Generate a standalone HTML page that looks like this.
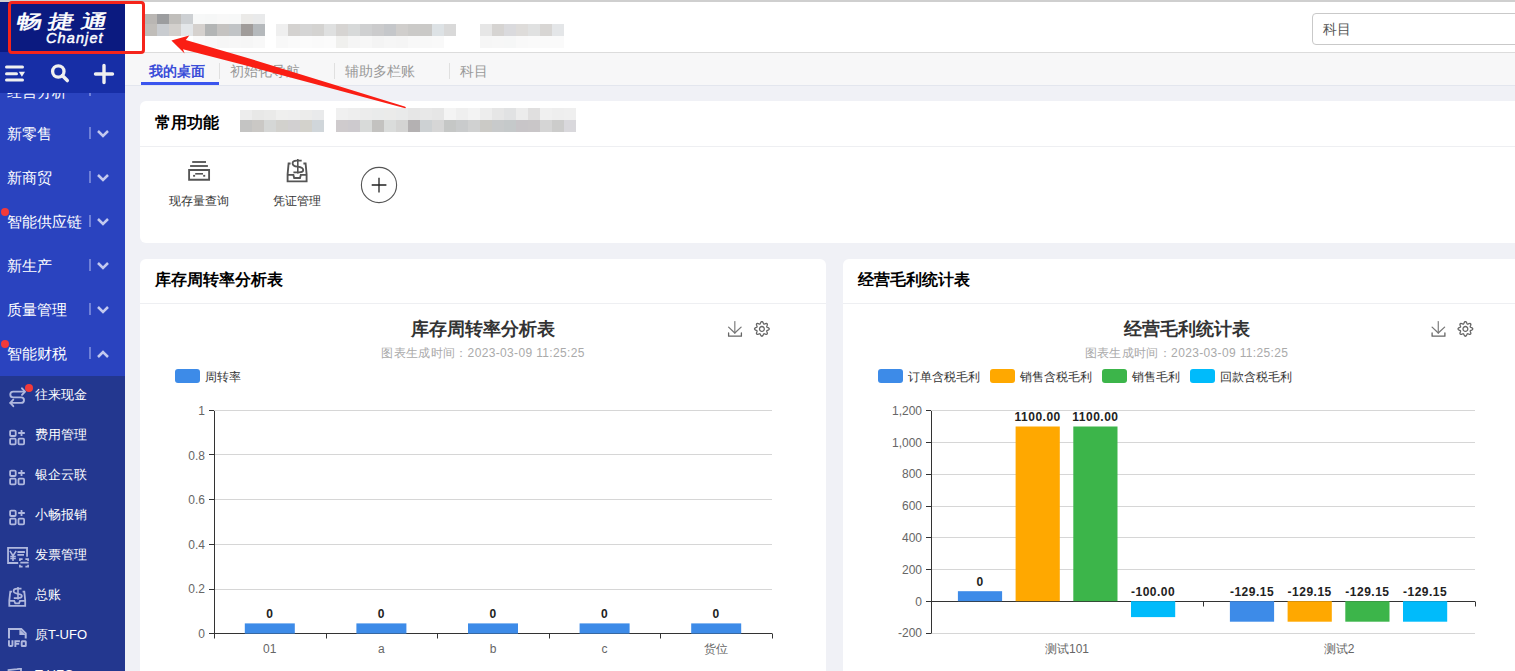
<!DOCTYPE html>
<html><head><meta charset="utf-8">
<style>
*{box-sizing:border-box;margin:0;padding:0}
html,body{width:1515px;height:671px;overflow:hidden}
body{position:relative;background:#f0f1f6;font-family:"Liberation Sans",sans-serif;color:#333}
.a{position:absolute}
#topline{left:0;top:0;width:1515px;height:2px;background:#cfcfcf}
#header{left:125px;top:2px;width:1390px;height:51px;background:#fff;border-bottom:1px solid #dcdcdc}
#tabs{left:125px;top:53px;width:1390px;height:33px;background:#f7f7f8;border-bottom:1px solid #e3e6ee}
#sidebar{left:0;top:2px;width:125px;height:669px;background:#2a43bf;overflow:hidden}
#logo{left:0;top:0;width:125px;height:50px;background:#0b1a80}
#toolbar{left:0;top:50px;width:125px;height:41px;background:#172ea6}
#sub{left:0;top:374px;width:125px;height:300px;background:#23378f}
.nav{position:absolute;left:7px;margin-top:1px;font-size:15.2px;color:#fff;line-height:20px;white-space:nowrap}
.sep{position:absolute;left:89px;width:2px;height:12px;background:#6f80d8}
.chev{position:absolute;left:96px;width:14px;height:10px}
.subi{position:absolute;left:35px;font-size:13px;color:#fff;line-height:18px;white-space:nowrap}
.sico{position:absolute;left:8px;width:20px;height:20px}
.dot{position:absolute;width:8px;height:8px;border-radius:50%;background:#f23a3a}
.card{position:absolute;background:#fff;border-radius:6px}
.ctitle{position:absolute;font-size:16px;font-weight:bold;color:#000;line-height:22px;white-space:nowrap}
.tab{position:absolute;top:62px;font-size:14px;line-height:18px;color:#999;white-space:nowrap}
.tsep{position:absolute;top:63px;width:1px;height:16px;background:#e0e0e0}
.mz{position:absolute;height:12px}
</style></head><body>
<div id="topline" class="a"></div>
<div id="header" class="a"></div>
<div id="tabs" class="a"></div>
<div class="mz" style="left:145px;top:14px;height:10px;width:12px;background:#b9b6b3"></div><div class="mz" style="left:157px;top:14px;height:10px;width:12px;background:#9c9d9f"></div><div class="mz" style="left:169px;top:14px;height:10px;width:12px;background:#c0bebb"></div><div class="mz" style="left:181px;top:14px;height:10px;width:12px;background:#cdd0d3"></div><div class="mz" style="left:193px;top:14px;height:10px;width:12px;background:#f7f8f8"></div><div class="mz" style="left:205px;top:14px;height:10px;width:12px;background:#f6f7f7"></div><div class="mz" style="left:217px;top:14px;height:10px;width:12px;background:#f8f8f8"></div><div class="mz" style="left:229px;top:14px;height:10px;width:12px;background:#f7f8f8"></div><div class="mz" style="left:241px;top:14px;height:10px;width:12px;background:#ebeae8"></div><div class="mz" style="left:253px;top:14px;height:10px;width:12px;background:#e9eaeb"></div><div class="mz" style="left:145px;top:24px;width:12px;background:#c0bdb9"></div><div class="mz" style="left:157px;top:24px;width:12px;background:#c9ccd0"></div><div class="mz" style="left:169px;top:24px;width:12px;background:#d3d0cd"></div><div class="mz" style="left:181px;top:24px;width:12px;background:#e3e6e9"></div><div class="mz" style="left:193px;top:24px;width:12px;background:#d5d1ce"></div><div class="mz" style="left:205px;top:24px;width:12px;background:#b3b5b5"></div><div class="mz" style="left:217px;top:24px;width:12px;background:#c5c3c1"></div><div class="mz" style="left:229px;top:24px;width:12px;background:#c1c4c6"></div><div class="mz" style="left:241px;top:24px;width:12px;background:#a09c9a"></div><div class="mz" style="left:253px;top:24px;width:12px;background:#b5b9bc"></div><div class="mz" style="left:193px;top:36px;width:12px;background:#fafafa"></div><div class="mz" style="left:205px;top:36px;width:12px;background:#f8f8f8"></div><div class="mz" style="left:217px;top:36px;width:12px;background:#f6f6f6"></div><div class="mz" style="left:229px;top:36px;width:12px;background:#f7f7f7"></div><div class="mz" style="left:241px;top:36px;width:12px;background:#f6f6f6"></div><div class="mz" style="left:253px;top:36px;width:12px;background:#f8f8f8"></div><div class="mz" style="left:276px;top:24px;width:12px;background:#efefef"></div><div class="mz" style="left:288px;top:24px;width:12px;background:#d4d2d0"></div><div class="mz" style="left:300px;top:24px;width:12px;background:#d5d5d5"></div><div class="mz" style="left:312px;top:24px;width:12px;background:#d4d3d1"></div><div class="mz" style="left:324px;top:24px;width:12px;background:#dfe0e0"></div><div class="mz" style="left:336px;top:24px;width:12px;background:#d6d4d2"></div><div class="mz" style="left:348px;top:24px;width:12px;background:#d7d9d9"></div><div class="mz" style="left:360px;top:24px;width:12px;background:#cfd0d1"></div><div class="mz" style="left:372px;top:24px;width:12px;background:#cbcbcc"></div><div class="mz" style="left:384px;top:24px;width:12px;background:#c5c7ca"></div><div class="mz" style="left:396px;top:24px;width:12px;background:#d0cecc"></div><div class="mz" style="left:408px;top:24px;width:12px;background:#cbcac8"></div><div class="mz" style="left:420px;top:24px;width:12px;background:#cac9c7"></div><div class="mz" style="left:432px;top:24px;width:12px;background:#dde2e5"></div><div class="mz" style="left:444px;top:24px;width:12px;background:#d9d9d9"></div><div class="mz" style="left:276px;top:36px;width:12px;background:#f8f8f8"></div><div class="mz" style="left:288px;top:36px;width:12px;background:#fafafa"></div><div class="mz" style="left:300px;top:36px;width:12px;background:#fbfbfb"></div><div class="mz" style="left:312px;top:36px;width:12px;background:#fafafa"></div><div class="mz" style="left:324px;top:36px;width:12px;background:#fbfbfb"></div><div class="mz" style="left:336px;top:36px;width:12px;background:#f0f0ee"></div><div class="mz" style="left:348px;top:36px;width:12px;background:#f5f5f5"></div><div class="mz" style="left:360px;top:36px;width:12px;background:#f7f7f7"></div><div class="mz" style="left:372px;top:36px;width:12px;background:#f4f4f4"></div><div class="mz" style="left:384px;top:36px;width:12px;background:#f6f6f6"></div><div class="mz" style="left:396px;top:36px;width:12px;background:#f5f5f5"></div><div class="mz" style="left:408px;top:36px;width:12px;background:#f8f8f8"></div><div class="mz" style="left:420px;top:36px;width:12px;background:#f8f8f8"></div><div class="mz" style="left:432px;top:36px;width:12px;background:#f9f9f9"></div><div class="mz" style="left:480px;top:24px;width:12px;background:#e6e6e6"></div><div class="mz" style="left:492px;top:24px;width:12px;background:#d6d4d2"></div><div class="mz" style="left:504px;top:24px;width:12px;background:#dadadd"></div><div class="mz" style="left:516px;top:24px;width:12px;background:#dedcda"></div><div class="mz" style="left:528px;top:24px;width:12px;background:#e0e1e1"></div><div class="mz" style="left:540px;top:24px;width:12px;background:#d8d6d4"></div><div class="mz" style="left:552px;top:24px;width:12px;background:#e4e6e8"></div><div class="mz" style="left:480px;top:36px;width:12px;background:#f6f6f6"></div><div class="mz" style="left:492px;top:36px;width:12px;background:#f7f7f7"></div><div class="mz" style="left:504px;top:36px;width:12px;background:#f6f7f7"></div><div class="mz" style="left:516px;top:36px;width:12px;background:#f9f9f9"></div><div class="mz" style="left:528px;top:36px;width:12px;background:#fafafa"></div><div class="mz" style="left:540px;top:36px;width:12px;background:#fafafa"></div><div class="mz" style="left:552px;top:36px;width:12px;background:#fafafa"></div>
<div class="a" style="left:1312px;top:13px;width:220px;height:32px;border:1px solid #c9c9c9;border-radius:4px;background:#fff"></div><div class="a" style="left:1323px;top:20px;font-size:14px;line-height:18px;color:#555">科目</div>
<div class="tab" style="left:149px;color:#3b4ed8;font-weight:bold">我的桌面</div>
<div class="a" style="left:141px;top:82px;width:78px;height:3px;background:#3a55ee"></div>
<div class="tsep" style="left:219px"></div>
<div class="tab" style="left:230px">初始化导航</div>
<div class="tsep" style="left:334px"></div>
<div class="tab" style="left:345px">辅助多栏账</div>
<div class="tsep" style="left:449px"></div>
<div class="tab" style="left:460px">科目</div>

<div id="sidebar" class="a">
  <div id="logo" class="a">
    <div class="a" style="left:16px;top:9px;font-size:19px;line-height:22px;color:#fff;font-weight:500;-webkit-text-stroke:0.5px #fff;transform:skewX(-13deg) scaleX(1.38);transform-origin:0 50%;letter-spacing:4.6px;white-space:nowrap">畅捷通</div>
    <div class="a" style="left:46px;top:27px;font-size:14.5px;line-height:18px;color:#fff;font-style:italic;font-weight:normal;-webkit-text-stroke:0.45px #fff;letter-spacing:1.1px;white-space:nowrap">Chanjet</div>
  </div>
  <div class="a" style="left:0;top:91px;width:125px;height:283px;overflow:hidden">
    <div class="nav" style="top:-12px">经营分析</div>
    <div class="sep" style="top:-9px"></div>
    <div class="nav" style="top:30px">新零售</div>
    <div class="sep" style="top:34px"></div>
    <svg class="chev" style="top:36px" viewBox="0 0 14 10"><path d="M2 2 L7 7 L12 2" fill="none" stroke="#c3c9ef" stroke-width="2.5"/></svg>
    <div class="nav" style="top:74px">新商贸</div>
    <div class="sep" style="top:78px"></div>
    <svg class="chev" style="top:80px" viewBox="0 0 14 10"><path d="M2 2 L7 7 L12 2" fill="none" stroke="#c3c9ef" stroke-width="2.5"/></svg>
    <div class="nav" style="top:118px">智能供应链</div>
    <div class="sep" style="top:122px"></div>
    <svg class="chev" style="top:124px" viewBox="0 0 14 10"><path d="M2 2 L7 7 L12 2" fill="none" stroke="#c3c9ef" stroke-width="2.5"/></svg>
    <div class="dot" style="left:1px;top:115px"></div>
    <div class="nav" style="top:162px">新生产</div>
    <div class="sep" style="top:166px"></div>
    <svg class="chev" style="top:168px" viewBox="0 0 14 10"><path d="M2 2 L7 7 L12 2" fill="none" stroke="#c3c9ef" stroke-width="2.5"/></svg>
    <div class="nav" style="top:206px">质量管理</div>
    <div class="sep" style="top:210px"></div>
    <svg class="chev" style="top:212px" viewBox="0 0 14 10"><path d="M2 2 L7 7 L12 2" fill="none" stroke="#c3c9ef" stroke-width="2.5"/></svg>
    <div class="nav" style="top:250px">智能财税</div>
    <div class="sep" style="top:254px"></div>
    <svg class="chev" style="top:256px" viewBox="0 0 14 10"><path d="M2 8 L7 3 L12 8" fill="none" stroke="#c3c9ef" stroke-width="2.5"/></svg>
    <div class="dot" style="left:1px;top:247px"></div>
  </div>
  <div id="toolbar" class="a">
    <svg class="a" style="left:4px;top:13px" width="22" height="18" viewBox="0 0 22 18"><g fill="#f0f0f0"><rect x="1" y="0.6" width="19" height="3" rx="1.5"/><rect x="1" y="7.2" width="13" height="3" rx="1.5"/><rect x="1" y="13.6" width="19" height="3" rx="1.5"/><path d="M14.8 6.8 L21 6.8 L17.9 11.8 Z"/></g></svg>
    <svg class="a" style="left:50px;top:11px" width="21" height="21" viewBox="0 0 21 21"><circle cx="8.3" cy="8.5" r="5.7" fill="none" stroke="#f0f0f0" stroke-width="3.3"/><path d="M12.3 12.6 L17.3 17.6" stroke="#f0f0f0" stroke-width="3.5" stroke-linecap="round"/></svg>
    <svg class="a" style="left:93px;top:11px" width="22" height="22" viewBox="0 0 22 22"><path d="M11 2.5 V19.5 M2.5 11 H19.5" stroke="#f0f0f0" stroke-width="3.4" stroke-linecap="round"/></svg>
  </div>
  <div id="sub" class="a">
    
<svg class="a" style="left:8px;top:10px" width="19" height="22" viewBox="0 0 19 22"><g fill="none" stroke="#b0b8de" stroke-width="1.9" stroke-linecap="round" stroke-linejoin="round"><path d="M16.5 5.6 H5.2 Q2.3 5.6 2.3 8.5 Q2.3 11.4 5.2 11.4 H13.1 Q16 11.4 16 14.15 Q16 16.9 13.1 16.9 H2.4"/><path d="M14 2.3 L17 5.6 L14 8.9"/><path d="M5.3 13.6 L2.3 16.9 L5.3 20.2"/></g></svg>
<div class="dot" style="left:25px;top:8px"></div>
<svg class="a" style="left:9px;top:53px" width="17" height="17" viewBox="0 0 17 17"><g fill="none" stroke="#b0b8de" stroke-width="1.8"><rect x="1.1" y="1.6" width="5.6" height="5.4" rx="1"/><rect x="1.1" y="9.7" width="5.6" height="5.6" rx="1"/><rect x="9.5" y="9.7" width="5.6" height="5.6" rx="1"/><path d="M12.5 0.9 V7.1 M9.2 4 H15.8"/></g></svg>
<svg class="a" style="left:9px;top:93px" width="17" height="17" viewBox="0 0 17 17"><g fill="none" stroke="#b0b8de" stroke-width="1.8"><rect x="1.1" y="1.6" width="5.6" height="5.4" rx="1"/><rect x="1.1" y="9.7" width="5.6" height="5.6" rx="1"/><rect x="9.5" y="9.7" width="5.6" height="5.6" rx="1"/><path d="M12.5 0.9 V7.1 M9.2 4 H15.8"/></g></svg>
<svg class="a" style="left:9px;top:133px" width="17" height="17" viewBox="0 0 17 17"><g fill="none" stroke="#b0b8de" stroke-width="1.8"><rect x="1.1" y="1.6" width="5.6" height="5.4" rx="1"/><rect x="1.1" y="9.7" width="5.6" height="5.6" rx="1"/><rect x="9.5" y="9.7" width="5.6" height="5.6" rx="1"/><path d="M12.5 0.9 V7.1 M9.2 4 H15.8"/></g></svg>
<svg class="a" style="left:7px;top:171px" width="24" height="22" viewBox="0 0 24 22"><g fill="none" stroke="#b0b8de" stroke-width="1.8"><path d="M11.2 16 H1.05 V0.9 H20.05 V9.8"/><path d="M2.9 3.9 L6 8.8 L9.2 3.9 M6 8.8 V14 M3.3 9.5 H8.8 M3.3 11.5 H8.8" stroke-width="1.6"/><path d="M10.4 5 H17.9 M10.4 7.9 H17"/><path d="M12.9 14 V12.1 H15.6 M18.4 12.1 H21.1 V14 M12.9 17.8 V19.7 H15.6 M18.4 19.7 H21.1 V17.8 M13.3 15.6 H21.6" stroke-width="1.7"/></g></svg>
<svg class="a" style="left:8px;top:210px" width="19" height="21" viewBox="0 0 19 21"><g fill="none" stroke="#b0b8de" stroke-width="1.8"><path d="M4.1 5.6 H2.3 L1.3 14.4 V19.8 H17.2 V14.4 L16.3 5.6 H14.6"/><path d="M1.3 14.8 H6.2 L7.3 17.3 H11 L12 14.8 H17.2"/><path d="M13.5 2.7 H9.2 Q5.6 2.7 5.6 5.1 Q5.6 7.3 9.8 7.8 Q13.9 8.3 13.9 10.1 Q13.9 12.1 10 12.1 H5.8" stroke-width="1.7"/><path d="M10 0.9 V13.6" stroke-width="1.6"/></g></svg>
<svg class="a" style="left:7px;top:252px" width="22" height="21" viewBox="0 0 22 21"><g fill="none" stroke="#b0b8de" stroke-width="2"><path d="M2 10.6 V1 H14.3 L18.7 5.4 V10.6"/><path d="M1.95 12.3 V17.2 Q1.95 18.05 2.9 18.05 H4.5 Q5.45 18.05 5.45 17.2 V12.3" stroke-width="1.9"/><path d="M8.35 19 V13.25 H12.9 M8.35 15.9 H12.2" stroke-width="1.9"/><rect x="14.7" y="13.25" width="4.1" height="4.8" rx="0.6" stroke-width="1.9"/></g><path d="M12.4 1 V6.9 H18.7 Z" fill="#b0b8de"/></svg>
<svg class="a" style="left:7px;top:292px" width="20" height="6" viewBox="0 0 20 6"><path d="M1.5 6 V2 L10 1.2 L14 0.6 V6" fill="none" stroke="#b0b8de" stroke-width="1.8"/></svg>
<div class="subi" style="top:10px">往来现金</div>
    <div class="subi" style="top:50px">费用管理</div>
    <div class="subi" style="top:90px">银企云联</div>
    <div class="subi" style="top:130px">小畅报销</div>
    <div class="subi" style="top:170px">发票管理</div>
    <div class="subi" style="top:210px">总账</div>
    <div class="subi" style="top:250px">原T-UFO</div>
    <div class="subi" style="top:290px">T-UFO</div>
  </div>
</div>

<div class="card" style="left:140px;top:101px;width:1400px;height:142px">
  <div class="ctitle" style="left:15px;top:11px">常用功能</div>
  <div class="a" style="left:0;top:45px;width:1400px;height:1px;background:#eeeff2"></div>
  <div class="a" style="left:0;top:92px;width:118px;text-align:center;font-size:12px;line-height:16px;color:#333">现存量查询</div>
  <div class="a" style="left:98px;top:92px;width:118px;text-align:center;font-size:12px;line-height:16px;color:#333">凭证管理</div>
  <svg class="a" style="left:47px;top:59px" width="25" height="23" viewBox="0 0 25 23"><g fill="none" stroke="#555" stroke-width="1.85"><path d="M5.2 2 H19"/><path d="M3.1 6 H20.9"/><path d="M2.1 10 H22.1 V19.7 H2.1 Z"/><path d="M8.2 13.8 H16" stroke-width="1.6"/></g><g fill="#555"><rect x="6.1" y="14.9" width="2" height="1.8"/><rect x="16.2" y="14.9" width="2" height="1.8"/></g></svg>
  <svg class="a" style="left:145px;top:57px" width="25" height="26" viewBox="0 0 25 26"><g fill="none" stroke="#555" stroke-width="1.85"><path d="M5.6 5.5 H3.6 L2.6 16.4 V23.4 H21.6 V16.4 L20.6 5.5 H18.4"/><path d="M2.6 16.9 H8.4 L9.2 20 H15 L15.8 16.9 H21.6"/><path d="M16.7 2.6 H11.5 Q7.6 2.6 7.6 5.4 Q7.6 8 12.6 8.7 Q18.2 9.5 18.2 12 Q18.2 14.3 14 14.3 H8.4"/><path d="M12.8 1 V15.6" stroke-width="1.6"/></g></svg>
  <svg class="a" style="left:220px;top:65px" width="38" height="38" viewBox="0 0 38 38"><circle cx="19" cy="19" r="17.6" fill="none" stroke="#555" stroke-width="1.1"/><path d="M11.7 19 H26.4 M19 11.8 V26.6" stroke="#222" stroke-width="1.3"/></svg>
</div>
<div class="mz" style="left:240px;top:110px;width:12px;height:10px;background:#ededed"></div><div class="mz" style="left:252px;top:110px;width:12px;height:10px;background:#e8e8e7"></div><div class="mz" style="left:264px;top:110px;width:12px;height:10px;background:#eaeae9"></div><div class="mz" style="left:276px;top:110px;width:12px;height:10px;background:#efefee"></div><div class="mz" style="left:288px;top:110px;width:12px;height:10px;background:#eeeeee"></div><div class="mz" style="left:300px;top:110px;width:12px;height:10px;background:#ececeb"></div><div class="mz" style="left:312px;top:110px;width:12px;height:10px;background:#e9eaeb"></div><div class="mz" style="left:240px;top:120px;width:12px;height:12px;background:#c4c4c3"></div><div class="mz" style="left:252px;top:120px;width:12px;height:12px;background:#cac8c5"></div><div class="mz" style="left:264px;top:120px;width:12px;height:12px;background:#d5d7d6"></div><div class="mz" style="left:276px;top:120px;width:12px;height:12px;background:#d2d1cd"></div><div class="mz" style="left:288px;top:120px;width:12px;height:12px;background:#d2d0d1"></div><div class="mz" style="left:300px;top:120px;width:12px;height:12px;background:#d3d2cc"></div><div class="mz" style="left:312px;top:120px;width:12px;height:12px;background:#d0d6da"></div><div class="mz" style="left:336px;top:108px;width:12px;height:12px;background:#f0f0f0"></div><div class="mz" style="left:348px;top:108px;width:12px;height:12px;background:#eeeeee"></div><div class="mz" style="left:360px;top:108px;width:12px;height:12px;background:#ececec"></div><div class="mz" style="left:372px;top:108px;width:12px;height:12px;background:#eaebeb"></div><div class="mz" style="left:384px;top:108px;width:12px;height:12px;background:#ebebea"></div><div class="mz" style="left:396px;top:108px;width:12px;height:12px;background:#e9eaea"></div><div class="mz" style="left:408px;top:108px;width:12px;height:12px;background:#e6e6e6"></div><div class="mz" style="left:420px;top:108px;width:12px;height:12px;background:#e8e8e8"></div><div class="mz" style="left:432px;top:108px;width:12px;height:12px;background:#e6e6e6"></div><div class="mz" style="left:444px;top:108px;width:12px;height:12px;background:#f4f4f4"></div><div class="mz" style="left:456px;top:108px;width:12px;height:12px;background:#efefef"></div><div class="mz" style="left:468px;top:108px;width:12px;height:12px;background:#f3f3f3"></div><div class="mz" style="left:480px;top:108px;width:12px;height:12px;background:#ededed"></div><div class="mz" style="left:492px;top:108px;width:12px;height:12px;background:#e6e6e6"></div><div class="mz" style="left:504px;top:108px;width:12px;height:12px;background:#e1e2e3"></div><div class="mz" style="left:516px;top:108px;width:12px;height:12px;background:#ececec"></div><div class="mz" style="left:528px;top:108px;width:12px;height:12px;background:#e0dfdf"></div><div class="mz" style="left:540px;top:108px;width:12px;height:12px;background:#f0f0f0"></div><div class="mz" style="left:552px;top:108px;width:12px;height:12px;background:#eeeeee"></div><div class="mz" style="left:564px;top:108px;width:12px;height:12px;background:#efefef"></div><div class="mz" style="left:336px;top:120px;width:12px;height:12px;background:#cfcbcd"></div><div class="mz" style="left:348px;top:120px;width:12px;height:12px;background:#cdcace"></div><div class="mz" style="left:360px;top:120px;width:12px;height:12px;background:#d8dad9"></div><div class="mz" style="left:372px;top:120px;width:12px;height:12px;background:#c3c2c0"></div><div class="mz" style="left:384px;top:120px;width:12px;height:12px;background:#dadcdb"></div><div class="mz" style="left:396px;top:120px;width:12px;height:12px;background:#d4d4d3"></div><div class="mz" style="left:408px;top:120px;width:12px;height:12px;background:#b4b1b2"></div><div class="mz" style="left:420px;top:120px;width:12px;height:12px;background:#cdd1d3"></div><div class="mz" style="left:432px;top:120px;width:12px;height:12px;background:#d6d6d6"></div><div class="mz" style="left:444px;top:120px;width:12px;height:12px;background:#c5c7c6"></div><div class="mz" style="left:456px;top:120px;width:12px;height:12px;background:#c9cbcc"></div><div class="mz" style="left:468px;top:120px;width:12px;height:12px;background:#d0d1d1"></div><div class="mz" style="left:480px;top:120px;width:12px;height:12px;background:#cbcac6"></div><div class="mz" style="left:492px;top:120px;width:12px;height:12px;background:#c8cacb"></div><div class="mz" style="left:504px;top:120px;width:12px;height:12px;background:#c5c9ca"></div><div class="mz" style="left:516px;top:120px;width:12px;height:12px;background:#c8c5c8"></div><div class="mz" style="left:528px;top:120px;width:12px;height:12px;background:#c9c6c8"></div><div class="mz" style="left:540px;top:120px;width:12px;height:12px;background:#d5d5d5"></div><div class="mz" style="left:552px;top:120px;width:12px;height:12px;background:#cccccb"></div><div class="mz" style="left:564px;top:120px;width:12px;height:12px;background:#d9d8dc"></div>
<div class="card" style="left:140px;top:259px;width:686px;height:430px">
<div class="ctitle" style="left:15px;top:10px">库存周转率分析表</div>
<div class="a" style="left:0;top:44px;width:686px;height:1px;background:#eeeff2"></div>
<svg class="a" style="left:0;top:0" width="686" height="430" viewBox="0 0 686 430">
<text x="343" y="76" text-anchor="middle" style="font-family:'Liberation Sans',sans-serif;font-size:18px;font-weight:bold" fill="#333">库存周转率分析表</text>
<text x="343" y="98" text-anchor="middle" style="font-family:'Liberation Sans',sans-serif;font-size:12px;letter-spacing:0.35px" fill="#aaa">图表生成时间：2023-03-09 11:25:25</text>
<g transform="translate(588,62)" fill="none" stroke="#666" stroke-width="1.3" stroke-linecap="round" stroke-linejoin="round">
<path d="M6.8 0.6 V12" stroke="#888"/><path d="M0.6 6.1 L6.8 12 L13.1 6.1" stroke="#777"/><path d="M0.6 11.9 V15.2 H13.4 V11.9"/></g><g transform="translate(621.9,69.9)" fill="none" stroke="#666" stroke-width="1.3"><path d="M0.00 -7.35 L0.29 -7.29 L0.56 -7.13 L0.81 -6.87 L1.04 -6.54 L1.23 -6.18 L1.39 -5.81 L1.54 -5.47 L1.68 -5.18 L1.83 -4.97 L2.01 -4.85 L2.22 -4.81 L2.47 -4.86 L2.78 -4.96 L3.12 -5.09 L3.50 -5.24 L3.89 -5.36 L4.28 -5.43 L4.64 -5.44 L4.95 -5.36 L5.20 -5.20 L5.36 -4.95 L5.44 -4.64 L5.43 -4.28 L5.36 -3.89 L5.24 -3.50 L5.09 -3.12 L4.96 -2.78 L4.86 -2.47 L4.81 -2.22 L4.85 -2.01 L4.97 -1.83 L5.18 -1.68 L5.47 -1.54 L5.81 -1.39 L6.18 -1.23 L6.54 -1.04 L6.87 -0.81 L7.13 -0.56 L7.29 -0.29 L7.35 -0.00 L7.29 0.29 L7.13 0.56 L6.87 0.81 L6.54 1.04 L6.18 1.23 L5.81 1.39 L5.47 1.54 L5.18 1.68 L4.97 1.83 L4.85 2.01 L4.81 2.22 L4.86 2.47 L4.96 2.78 L5.09 3.12 L5.24 3.50 L5.36 3.89 L5.43 4.28 L5.44 4.64 L5.36 4.95 L5.20 5.20 L4.95 5.36 L4.64 5.44 L4.28 5.43 L3.89 5.36 L3.50 5.24 L3.12 5.09 L2.78 4.96 L2.47 4.86 L2.22 4.81 L2.01 4.85 L1.83 4.97 L1.68 5.18 L1.54 5.47 L1.39 5.81 L1.23 6.18 L1.04 6.54 L0.81 6.87 L0.56 7.13 L0.29 7.29 L0.00 7.35 L-0.29 7.29 L-0.56 7.13 L-0.81 6.87 L-1.04 6.54 L-1.23 6.18 L-1.39 5.81 L-1.54 5.47 L-1.68 5.18 L-1.83 4.97 L-2.01 4.85 L-2.22 4.81 L-2.47 4.86 L-2.78 4.96 L-3.12 5.09 L-3.50 5.24 L-3.89 5.36 L-4.28 5.43 L-4.64 5.44 L-4.95 5.36 L-5.20 5.20 L-5.36 4.95 L-5.44 4.64 L-5.43 4.28 L-5.36 3.89 L-5.24 3.50 L-5.09 3.12 L-4.96 2.78 L-4.86 2.47 L-4.81 2.22 L-4.85 2.01 L-4.97 1.83 L-5.18 1.68 L-5.47 1.54 L-5.81 1.39 L-6.18 1.23 L-6.54 1.04 L-6.87 0.81 L-7.13 0.56 L-7.29 0.29 L-7.35 0.00 L-7.29 -0.29 L-7.13 -0.56 L-6.87 -0.81 L-6.54 -1.04 L-6.18 -1.23 L-5.81 -1.39 L-5.47 -1.54 L-5.18 -1.68 L-4.97 -1.83 L-4.85 -2.01 L-4.81 -2.22 L-4.86 -2.47 L-4.96 -2.78 L-5.09 -3.12 L-5.24 -3.50 L-5.36 -3.89 L-5.43 -4.28 L-5.44 -4.64 L-5.36 -4.95 L-5.20 -5.20 L-4.95 -5.36 L-4.64 -5.44 L-4.28 -5.43 L-3.89 -5.36 L-3.50 -5.24 L-3.12 -5.09 L-2.78 -4.96 L-2.47 -4.86 L-2.22 -4.81 L-2.01 -4.85 L-1.83 -4.97 L-1.68 -5.18 L-1.54 -5.47 L-1.39 -5.81 L-1.23 -6.18 L-1.04 -6.54 L-0.81 -6.87 L-0.56 -7.13 L-0.29 -7.29 L-0.00 -7.35Z"/><circle cx="0" cy="0" r="2.4"/></g>
<rect x="35" y="110" width="25" height="14" rx="3" fill="#3d8be8"/>
<text x="65" y="121.5" style="font-family:'Liberation Sans',sans-serif;font-size:12px" fill="#333">周转率</text>
<path d="M69 374.5 H74" stroke="#333" stroke-width="1"/>
<text x="65" y="378.9" text-anchor="end" style="font-family:'Liberation Sans',sans-serif;font-size:12px" fill="#666">0</text>
<path d="M74 330.5 H632" stroke="#d6d6d6" stroke-width="1"/>
<path d="M69 330.5 H74" stroke="#333" stroke-width="1"/>
<text x="65" y="334.3" text-anchor="end" style="font-family:'Liberation Sans',sans-serif;font-size:12px" fill="#666">0.2</text>
<path d="M74 285.5 H632" stroke="#d6d6d6" stroke-width="1"/>
<path d="M69 285.5 H74" stroke="#333" stroke-width="1"/>
<text x="65" y="289.7" text-anchor="end" style="font-family:'Liberation Sans',sans-serif;font-size:12px" fill="#666">0.4</text>
<path d="M74 240.5 H632" stroke="#d6d6d6" stroke-width="1"/>
<path d="M69 240.5 H74" stroke="#333" stroke-width="1"/>
<text x="65" y="245.1" text-anchor="end" style="font-family:'Liberation Sans',sans-serif;font-size:12px" fill="#666">0.6</text>
<path d="M74 195.5 H632" stroke="#d6d6d6" stroke-width="1"/>
<path d="M69 195.5 H74" stroke="#333" stroke-width="1"/>
<text x="65" y="200.5" text-anchor="end" style="font-family:'Liberation Sans',sans-serif;font-size:12px" fill="#666">0.8</text>
<path d="M74 151.5 H632" stroke="#d6d6d6" stroke-width="1"/>
<path d="M69 151.5 H74" stroke="#333" stroke-width="1"/>
<text x="65" y="155.9" text-anchor="end" style="font-family:'Liberation Sans',sans-serif;font-size:12px" fill="#666">1</text>
<path d="M74.5 152 V374.5" stroke="#333" stroke-width="1"/>
<path d="M74 374.5 H632" stroke="#333" stroke-width="1"/>
<path d="M74.5 374.5 V379.5" stroke="#333" stroke-width="1"/>
<path d="M186.5 374.5 V379.5" stroke="#333" stroke-width="1"/>
<path d="M297.5 374.5 V379.5" stroke="#333" stroke-width="1"/>
<path d="M409.5 374.5 V379.5" stroke="#333" stroke-width="1"/>
<path d="M520.5 374.5 V379.5" stroke="#333" stroke-width="1"/>
<path d="M632.5 374.5 V379.5" stroke="#333" stroke-width="1"/>
<rect x="104.8" y="364.4" width="50" height="10.2" fill="#3d8be8"/>
<text x="129.8" y="359.3" text-anchor="middle" style="font-family:'Liberation Sans',sans-serif;font-size:12px;font-weight:bold;letter-spacing:0.5px" fill="#222">0</text>
<text x="129.8" y="394" text-anchor="middle" style="font-family:'Liberation Sans',sans-serif;font-size:12px" fill="#666">01</text>
<rect x="216.4" y="364.4" width="50" height="10.2" fill="#3d8be8"/>
<text x="241.4" y="359.3" text-anchor="middle" style="font-family:'Liberation Sans',sans-serif;font-size:12px;font-weight:bold;letter-spacing:0.5px" fill="#222">0</text>
<text x="241.4" y="394" text-anchor="middle" style="font-family:'Liberation Sans',sans-serif;font-size:12px" fill="#666">a</text>
<rect x="328.0" y="364.4" width="50" height="10.2" fill="#3d8be8"/>
<text x="353.0" y="359.3" text-anchor="middle" style="font-family:'Liberation Sans',sans-serif;font-size:12px;font-weight:bold;letter-spacing:0.5px" fill="#222">0</text>
<text x="353.0" y="394" text-anchor="middle" style="font-family:'Liberation Sans',sans-serif;font-size:12px" fill="#666">b</text>
<rect x="439.6" y="364.4" width="50" height="10.2" fill="#3d8be8"/>
<text x="464.6" y="359.3" text-anchor="middle" style="font-family:'Liberation Sans',sans-serif;font-size:12px;font-weight:bold;letter-spacing:0.5px" fill="#222">0</text>
<text x="464.6" y="394" text-anchor="middle" style="font-family:'Liberation Sans',sans-serif;font-size:12px" fill="#666">c</text>
<rect x="551.2" y="364.4" width="50" height="10.2" fill="#3d8be8"/>
<text x="576.2" y="359.3" text-anchor="middle" style="font-family:'Liberation Sans',sans-serif;font-size:12px;font-weight:bold;letter-spacing:0.5px" fill="#222">0</text>
<text x="576.2" y="394" text-anchor="middle" style="font-family:'Liberation Sans',sans-serif;font-size:12px" fill="#666">货位</text>
</svg>
</div>
<div class="card" style="left:843px;top:259px;width:687px;height:430px">
<div class="ctitle" style="left:15px;top:10px">经营毛利统计表</div>
<div class="a" style="left:0;top:44px;width:687px;height:1px;background:#eeeff2"></div>
<svg class="a" style="left:0;top:0" width="687" height="430" viewBox="0 0 687 430">
<text x="343.5" y="76" text-anchor="middle" style="font-family:'Liberation Sans',sans-serif;font-size:18px;font-weight:bold" fill="#333">经营毛利统计表</text>
<text x="343.5" y="98" text-anchor="middle" style="font-family:'Liberation Sans',sans-serif;font-size:12px;letter-spacing:0.35px" fill="#aaa">图表生成时间：2023-03-09 11:25:25</text>
<g transform="translate(588.5,62)" fill="none" stroke="#666" stroke-width="1.3" stroke-linecap="round" stroke-linejoin="round">
<path d="M6.8 0.6 V12" stroke="#888"/><path d="M0.6 6.1 L6.8 12 L13.1 6.1" stroke="#777"/><path d="M0.6 11.9 V15.2 H13.4 V11.9"/></g><g transform="translate(622.4,69.9)" fill="none" stroke="#666" stroke-width="1.3"><path d="M0.00 -7.35 L0.29 -7.29 L0.56 -7.13 L0.81 -6.87 L1.04 -6.54 L1.23 -6.18 L1.39 -5.81 L1.54 -5.47 L1.68 -5.18 L1.83 -4.97 L2.01 -4.85 L2.22 -4.81 L2.47 -4.86 L2.78 -4.96 L3.12 -5.09 L3.50 -5.24 L3.89 -5.36 L4.28 -5.43 L4.64 -5.44 L4.95 -5.36 L5.20 -5.20 L5.36 -4.95 L5.44 -4.64 L5.43 -4.28 L5.36 -3.89 L5.24 -3.50 L5.09 -3.12 L4.96 -2.78 L4.86 -2.47 L4.81 -2.22 L4.85 -2.01 L4.97 -1.83 L5.18 -1.68 L5.47 -1.54 L5.81 -1.39 L6.18 -1.23 L6.54 -1.04 L6.87 -0.81 L7.13 -0.56 L7.29 -0.29 L7.35 -0.00 L7.29 0.29 L7.13 0.56 L6.87 0.81 L6.54 1.04 L6.18 1.23 L5.81 1.39 L5.47 1.54 L5.18 1.68 L4.97 1.83 L4.85 2.01 L4.81 2.22 L4.86 2.47 L4.96 2.78 L5.09 3.12 L5.24 3.50 L5.36 3.89 L5.43 4.28 L5.44 4.64 L5.36 4.95 L5.20 5.20 L4.95 5.36 L4.64 5.44 L4.28 5.43 L3.89 5.36 L3.50 5.24 L3.12 5.09 L2.78 4.96 L2.47 4.86 L2.22 4.81 L2.01 4.85 L1.83 4.97 L1.68 5.18 L1.54 5.47 L1.39 5.81 L1.23 6.18 L1.04 6.54 L0.81 6.87 L0.56 7.13 L0.29 7.29 L0.00 7.35 L-0.29 7.29 L-0.56 7.13 L-0.81 6.87 L-1.04 6.54 L-1.23 6.18 L-1.39 5.81 L-1.54 5.47 L-1.68 5.18 L-1.83 4.97 L-2.01 4.85 L-2.22 4.81 L-2.47 4.86 L-2.78 4.96 L-3.12 5.09 L-3.50 5.24 L-3.89 5.36 L-4.28 5.43 L-4.64 5.44 L-4.95 5.36 L-5.20 5.20 L-5.36 4.95 L-5.44 4.64 L-5.43 4.28 L-5.36 3.89 L-5.24 3.50 L-5.09 3.12 L-4.96 2.78 L-4.86 2.47 L-4.81 2.22 L-4.85 2.01 L-4.97 1.83 L-5.18 1.68 L-5.47 1.54 L-5.81 1.39 L-6.18 1.23 L-6.54 1.04 L-6.87 0.81 L-7.13 0.56 L-7.29 0.29 L-7.35 0.00 L-7.29 -0.29 L-7.13 -0.56 L-6.87 -0.81 L-6.54 -1.04 L-6.18 -1.23 L-5.81 -1.39 L-5.47 -1.54 L-5.18 -1.68 L-4.97 -1.83 L-4.85 -2.01 L-4.81 -2.22 L-4.86 -2.47 L-4.96 -2.78 L-5.09 -3.12 L-5.24 -3.50 L-5.36 -3.89 L-5.43 -4.28 L-5.44 -4.64 L-5.36 -4.95 L-5.20 -5.20 L-4.95 -5.36 L-4.64 -5.44 L-4.28 -5.43 L-3.89 -5.36 L-3.50 -5.24 L-3.12 -5.09 L-2.78 -4.96 L-2.47 -4.86 L-2.22 -4.81 L-2.01 -4.85 L-1.83 -4.97 L-1.68 -5.18 L-1.54 -5.47 L-1.39 -5.81 L-1.23 -6.18 L-1.04 -6.54 L-0.81 -6.87 L-0.56 -7.13 L-0.29 -7.29 L-0.00 -7.35Z"/><circle cx="0" cy="0" r="2.4"/></g>
<rect x="35" y="110" width="25" height="14" rx="3" fill="#3d8be8"/>
<text x="65" y="121.5" style="font-family:'Liberation Sans',sans-serif;font-size:12px" fill="#333">订单含税毛利</text>
<rect x="147" y="110" width="25" height="14" rx="3" fill="#ffa800"/>
<text x="177" y="121.5" style="font-family:'Liberation Sans',sans-serif;font-size:12px" fill="#333">销售含税毛利</text>
<rect x="259" y="110" width="25" height="14" rx="3" fill="#3cb54a"/>
<text x="289" y="121.5" style="font-family:'Liberation Sans',sans-serif;font-size:12px" fill="#333">销售毛利</text>
<rect x="347" y="110" width="25" height="14" rx="3" fill="#00bbfb"/>
<text x="377" y="121.5" style="font-family:'Liberation Sans',sans-serif;font-size:12px" fill="#333">回款含税毛利</text>
<path d="M88 151.5 H632" stroke="#d6d6d6" stroke-width="1"/>
<path d="M83 151.5 H88" stroke="#333" stroke-width="1"/>
<text x="79" y="155.9" text-anchor="end" style="font-family:'Liberation Sans',sans-serif;font-size:12px" fill="#666">1,200</text>
<path d="M88 183.5 H632" stroke="#d6d6d6" stroke-width="1"/>
<path d="M83 183.5 H88" stroke="#333" stroke-width="1"/>
<text x="79" y="187.7" text-anchor="end" style="font-family:'Liberation Sans',sans-serif;font-size:12px" fill="#666">1,000</text>
<path d="M88 215.5 H632" stroke="#d6d6d6" stroke-width="1"/>
<path d="M83 215.5 H88" stroke="#333" stroke-width="1"/>
<text x="79" y="219.4" text-anchor="end" style="font-family:'Liberation Sans',sans-serif;font-size:12px" fill="#666">800</text>
<path d="M88 247.5 H632" stroke="#d6d6d6" stroke-width="1"/>
<path d="M83 247.5 H88" stroke="#333" stroke-width="1"/>
<text x="79" y="251.2" text-anchor="end" style="font-family:'Liberation Sans',sans-serif;font-size:12px" fill="#666">600</text>
<path d="M88 278.5 H632" stroke="#d6d6d6" stroke-width="1"/>
<path d="M83 278.5 H88" stroke="#333" stroke-width="1"/>
<text x="79" y="283.0" text-anchor="end" style="font-family:'Liberation Sans',sans-serif;font-size:12px" fill="#666">400</text>
<path d="M88 310.5 H632" stroke="#d6d6d6" stroke-width="1"/>
<path d="M83 310.5 H88" stroke="#333" stroke-width="1"/>
<text x="79" y="314.8" text-anchor="end" style="font-family:'Liberation Sans',sans-serif;font-size:12px" fill="#666">200</text>
<path d="M83 342.5 H88" stroke="#333" stroke-width="1"/>
<text x="79" y="346.5" text-anchor="end" style="font-family:'Liberation Sans',sans-serif;font-size:12px" fill="#666">0</text>
<path d="M88 374.5 H632" stroke="#d6d6d6" stroke-width="1"/>
<path d="M83 374.5 H88" stroke="#333" stroke-width="1"/>
<text x="79" y="378.3" text-anchor="end" style="font-family:'Liberation Sans',sans-serif;font-size:12px" fill="#666">-200</text>
<path d="M88.5 152 V374.5" stroke="#333" stroke-width="1"/>
<path d="M88 342.5 H632" stroke="#333" stroke-width="1"/>
<path d="M88.5 342.5 V347.5" stroke="#333" stroke-width="1"/>
<path d="M360.5 342.5 V347.5" stroke="#333" stroke-width="1"/>
<path d="M632.5 342.5 V347.5" stroke="#333" stroke-width="1"/>
<rect x="114.9" y="332.2" width="44.2" height="10.0" fill="#3d8be8"/>
<text x="137.0" y="326.6" text-anchor="middle" style="font-family:'Liberation Sans',sans-serif;font-size:12px;font-weight:bold;letter-spacing:0.5px" fill="#222">0</text>
<rect x="172.6" y="167.5" width="44.2" height="174.7" fill="#ffa800"/>
<text x="194.7" y="161.9" text-anchor="middle" style="font-family:'Liberation Sans',sans-serif;font-size:12px;font-weight:bold;letter-spacing:0.5px" fill="#222">1100.00</text>
<rect x="230.3" y="167.5" width="44.2" height="174.7" fill="#3cb54a"/>
<text x="252.4" y="161.9" text-anchor="middle" style="font-family:'Liberation Sans',sans-serif;font-size:12px;font-weight:bold;letter-spacing:0.5px" fill="#222">1100.00</text>
<rect x="288.0" y="342.2" width="44.2" height="15.9" fill="#00bbfb"/>
<text x="310.1" y="336.6" text-anchor="middle" style="font-family:'Liberation Sans',sans-serif;font-size:12px;font-weight:bold;letter-spacing:0.5px" fill="#222">-100.00</text>
<rect x="386.9" y="342.2" width="44.2" height="20.5" fill="#3d8be8"/>
<text x="409.0" y="336.6" text-anchor="middle" style="font-family:'Liberation Sans',sans-serif;font-size:12px;font-weight:bold;letter-spacing:0.5px" fill="#222">-129.15</text>
<rect x="444.6" y="342.2" width="44.2" height="20.5" fill="#ffa800"/>
<text x="466.7" y="336.6" text-anchor="middle" style="font-family:'Liberation Sans',sans-serif;font-size:12px;font-weight:bold;letter-spacing:0.5px" fill="#222">-129.15</text>
<rect x="502.3" y="342.2" width="44.2" height="20.5" fill="#3cb54a"/>
<text x="524.4" y="336.6" text-anchor="middle" style="font-family:'Liberation Sans',sans-serif;font-size:12px;font-weight:bold;letter-spacing:0.5px" fill="#222">-129.15</text>
<rect x="560.0" y="342.2" width="44.2" height="20.5" fill="#00bbfb"/>
<text x="582.1" y="336.6" text-anchor="middle" style="font-family:'Liberation Sans',sans-serif;font-size:12px;font-weight:bold;letter-spacing:0.5px" fill="#222">-129.15</text>
<text x="224.0" y="394" text-anchor="middle" style="font-family:'Liberation Sans',sans-serif;font-size:12px" fill="#666">测试101</text>
<text x="496.0" y="394" text-anchor="middle" style="font-family:'Liberation Sans',sans-serif;font-size:12px" fill="#666">测试2</text>
</svg>
</div>
<div class="a" style="left:8px;top:1px;width:137px;height:53px;border:3px solid #f5241b;border-radius:4px;z-index:50"></div>
<svg class="a" style="left:0;top:0;z-index:51" width="1515" height="671" viewBox="0 0 1515 671"><path d="M171.4 40.4 L189.3 35.5 L185.8 39.9 L245 57.2 L340 86.5 L404.6 106.4 Q406.8 107.4 405.2 108.2 L340 90.8 L245 65.3 L183.0 49.2 L184.6 53.4 Z" fill="#fa1e14"/></svg>
</body></html>
